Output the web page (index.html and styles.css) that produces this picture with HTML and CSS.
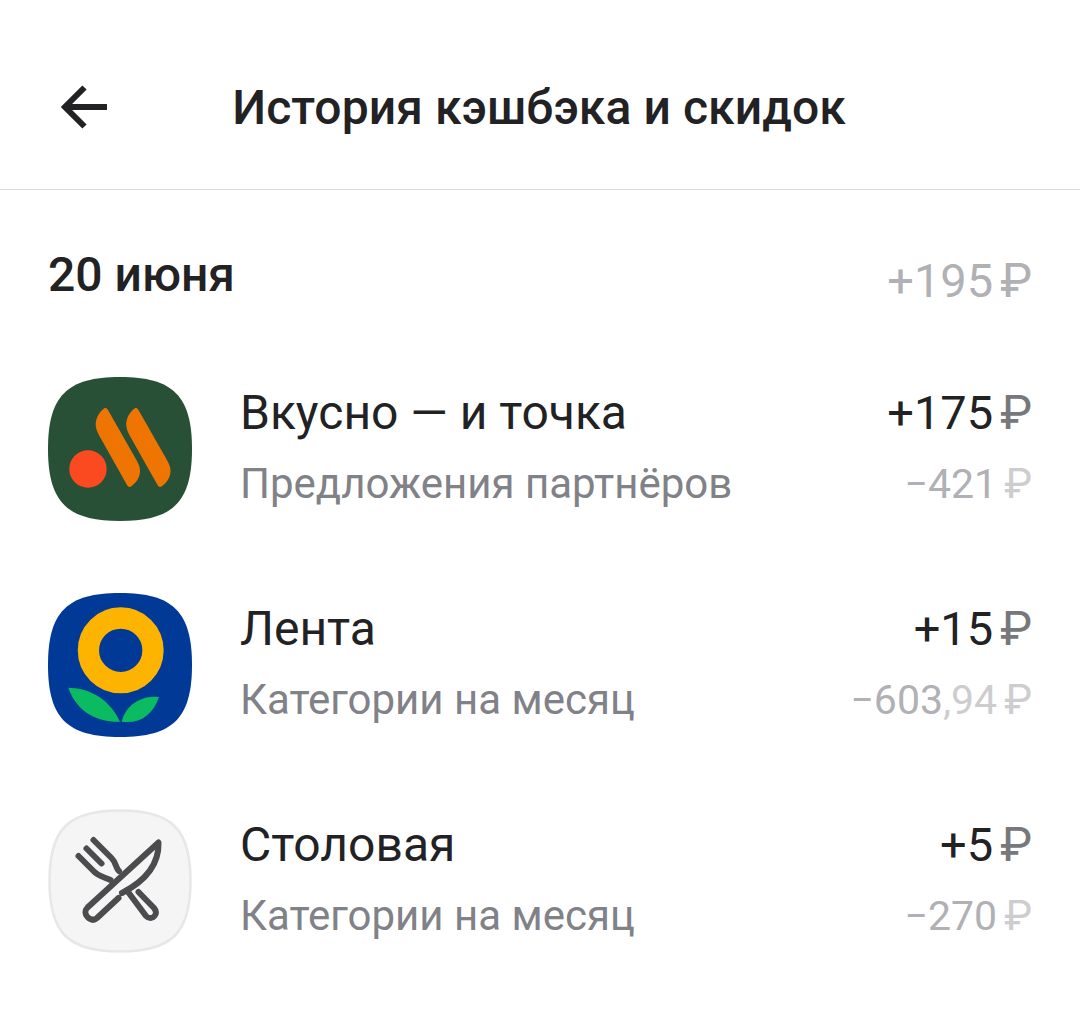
FILE: index.html

```html
<!DOCTYPE html>
<html lang="ru">
<head>
    <meta charset="UTF-8">
    <meta name="viewport" content="width=device-width, initial-scale=1.0">
    <title>История кэшбэка и скидок</title>
    <link rel="stylesheet" href="styles.css">
</head>
<body>
    <header class="top-bar">
        <svg class="back-icon" viewBox="0 0 48 48" width="48" height="48">
            <path d="M47 23H5M24.5 3.5L5 23l19.5 19.5" fill="none" stroke="#222224" stroke-width="6"/>
        </svg>
        <h1>История кэшбэка и скидок</h1>
    </header>

    <main class="history">
        <div class="day-row">
            <h2>20 июня</h2>
            <span class="day-total">+195<span class="rub">₽</span></span>
        </div>

        <div class="item">
            <svg class="logo" viewBox="0 0 144 144" width="144" height="144">
                <path d="M72 0C125 0 144 19 144 72S125 144 72 144 0 125 0 72 19 0 72 0Z" fill="#275036"/>
                <circle cx="40" cy="92" r="18.7" fill="#fc4a20"/>
                <path d="M56 31.5C51 35 47.5 42 47.7 48C48 53 50 56 52 60L79 108C80 110 81.5 110.5 83 109.5C89 105 92 100 92 94C92 90 91 88 89 84L60 33C58.5 31 57.5 30.5 56 31.5Z" fill="#ee7501"/>
                <path d="M86.5 31.5C81.5 35 78 42 78.2 48C78.5 53 80.5 56 82.5 60L109.5 108C110.5 110 112 110.5 113.5 109.5C119.5 105 122.5 100 122.5 94C122.5 90 121.5 88 119.5 84L90.5 33C89 31 88 30.5 86.5 31.5Z" fill="#ee7501"/>
            </svg>
            <div class="item-text">
                <div class="item-name">Вкусно — и точка</div>
                <div class="item-type">Предложения партнёров</div>
            </div>
            <div class="item-sums">
                <div class="sum-plus">+175<span class="rub">₽</span></div>
                <div class="sum-minus">−421<span class="rub">₽</span></div>
            </div>
        </div>

        <div class="item">
            <svg class="logo" viewBox="0 0 144 144" width="144" height="144">
                <path d="M72 0C125 0 144 19 144 72S125 144 72 144 0 125 0 72 19 0 72 0Z" fill="#013a96"/>
                <circle cx="72.7" cy="57.3" r="32.3" fill="none" stroke="#fdb400" stroke-width="21.3"/>
                <path d="M20.3 94.7C38 95 60 103 72 128.7C52 129 30 122 20.3 94.7Z" fill="#0abb62"/>
                <path d="M111 104C96 102 78 110 73.7 128.7C92 131 105 122 111 104Z" fill="#0abb62"/>
            </svg>
            <div class="item-text">
                <div class="item-name">Лента</div>
                <div class="item-type">Категории на месяц</div>
            </div>
            <div class="item-sums">
                <div class="sum-plus">+15<span class="rub">₽</span></div>
                <div class="sum-minus">−603<span class="cents">,94</span><span class="rub">₽</span></div>
            </div>
        </div>

        <div class="item">
            <svg class="logo" viewBox="0 0 144 144" width="144" height="144">
                <path d="M72 1.5C124 1.5 142.5 20 142.5 72S124 142.5 72 142.5 1.5 124 1.5 72 20 1.5 72 1.5Z" fill="#f5f5f5" stroke="#e6e7e8" stroke-width="2.5"/>
                <g fill="none" stroke="#4c4c4f" stroke-width="6" stroke-linecap="round" stroke-linejoin="round">
                    <path d="M45.5 31L63.5 49C68.5 54 67.5 59 71 62"/>
                    <path d="M38.5 39.5L53.5 54.5"/>
                    <path d="M30.5 47L46 62.5C50 67 56 68 62.5 71"/>
                    <path d="M70.5 89L49 109C45.5 112 42 110.5 39.5 108C37 105.5 36.5 101.5 39.5 98.5L110.5 33.5C111 50 103 69 74 84"/>
                    <path d="M79 81.5L98 107C101 110 104.5 109.5 106.5 107C108.5 105 108.5 102 106 99L90.5 83"/>
                </g>
            </svg>
            <div class="item-text">
                <div class="item-name">Столовая</div>
                <div class="item-type">Категории на месяц</div>
            </div>
            <div class="item-sums">
                <div class="sum-plus">+5<span class="rub">₽</span></div>
                <div class="sum-minus">−270<span class="rub">₽</span></div>
            </div>
        </div>
    </main>
</body>
</html>
```

FILE: styles.css

```css
body {
    margin: 0;
    font-family: Roboto, "Liberation Sans", sans-serif;
    color: #222224;
    background-color: #fff;
}
h1, h2 {
    margin: 0;
    font-weight: 500;
}
.top-bar {
    display: grid;
    grid-template-columns: 1fr auto 1fr;
    align-items: center;
    height: 190px;
    padding: 26px 62px 0 60px;
    box-sizing: border-box;
    border-bottom: 1px solid #dcdcdc;
}
.back-icon {
    display: block;
}
.top-bar h1 {
    font-size: 48px;
    line-height: 52px;
    letter-spacing: 0.08px;
    white-space: nowrap;
}
.history {
    padding: 0 48px;
}
.day-row {
    display: flex;
    justify-content: space-between;
    height: 187px;
    padding-top: 57px;
    box-sizing: border-box;
}
.day-row h2 {
    font-size: 48px;
    line-height: 56px;
}
.day-total {
    font-size: 47px;
    line-height: 68px;
    color: #b0b0b5;
}
.rub {
    margin-left: 7px;
}
.day-total .rub,
.sum-plus .rub {
    font-size: 48px;
}
.item {
    display: flex;
    align-items: center;
    height: 144px;
    margin-bottom: 72px;
}
.logo {
    flex-shrink: 0;
    margin-right: 48px;
}
.item-text {
    flex: 1;
}
.item-name {
    font-size: 48px;
    line-height: 70px;
}
.item-type {
    font-size: 42px;
    line-height: 72px;
    color: #818188;
}
.item-sums {
    text-align: right;
}
.sum-plus {
    font-size: 47px;
    line-height: 70px;
}
.sum-plus .rub {
    color: #77777c;
}
.sum-minus {
    font-size: 41px;
    line-height: 72px;
    color: #b0b0b5;
}
.sum-minus .rub {
    font-size: 42px;
}
.sum-minus .rub,
.cents {
    color: #cdcdd0;
}
```
